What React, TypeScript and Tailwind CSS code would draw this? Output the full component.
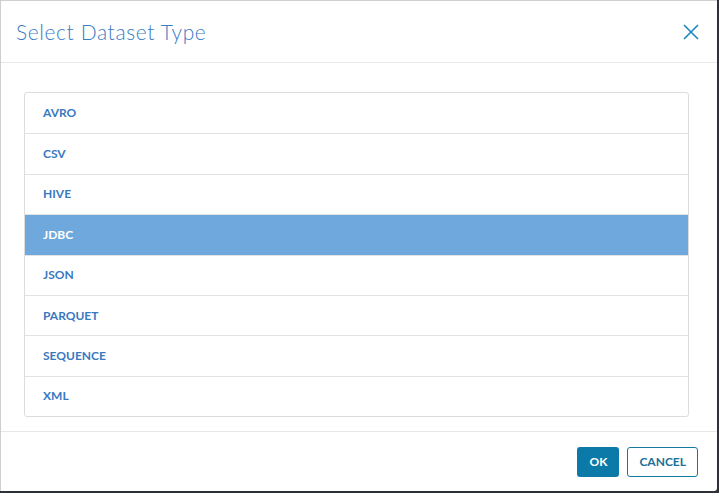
import { useState } from 'react'

const types = ['AVRO', 'CSV', 'HIVE', 'JDBC', 'JSON', 'PARQUET', 'SEQUENCE', 'XML']

export default function App() {
  const [selected, setSelected] = useState('JDBC')

  return (
    <div className="w-[719px] h-[493px] bg-[#2e3238] overflow-hidden" style={{ fontFamily: 'Lato, "Open Sans", sans-serif' }}>
      <div className="w-[717px] h-[491px] bg-white border-l border-t border-[#cfcfcf] rounded-br-[3px] flex flex-col">
        <div className="h-[62px] flex items-center justify-between pl-[15px] pr-[16px] border-b border-[#e8e8e8] shrink-0">
          <h2 className="text-[21px] font-light text-[#3a7bc4] tracking-[0.6px] mt-[1px]">Select Dataset Type</h2>
          <button className="w-[20px] h-[20px] flex items-center justify-center text-[#1a87c0]" aria-label="Close">
            <svg width="18" height="18" viewBox="0 0 18 18" fill="none" stroke="currentColor" strokeWidth="1.6">
              <path d="M2 2 L16 16 M16 2 L2 16" />
            </svg>
          </button>
        </div>

        <div className="pt-[29px] pl-[23px] pr-[28px] pb-[14px] shrink-0">
          <div className="border border-[#dcdcdc] rounded-[3px] overflow-hidden">
            {types.map((t, i) => (
              <div
                key={t}
                onClick={() => setSelected(t)}
                className={`h-[40.4px] flex items-center pl-[18px] text-[12px] font-bold cursor-pointer ${
                  i > 0 ? 'border-t border-[#e2e2e2]' : ''
                } ${selected === t ? 'bg-[#6fa8dc] text-white border-[#6fa8dc]' : 'text-[#3a78bf]'}`}
              >
                {t}
              </div>
            ))}
          </div>
        </div>

        <div className="flex-1 border-t border-[#e8e8e8] flex items-center justify-end gap-[8px] pr-[19px]">
          <button className="h-[30px] px-[12px] rounded-[3px] bg-[#0b7aa8] text-white text-[12px] font-bold">OK</button>
          <button className="h-[30px] px-[11px] rounded-[3px] border border-[#1479a0] text-[#1b6f98] text-[12px] font-bold">CANCEL</button>
        </div>
      </div>
    </div>
  )
}
